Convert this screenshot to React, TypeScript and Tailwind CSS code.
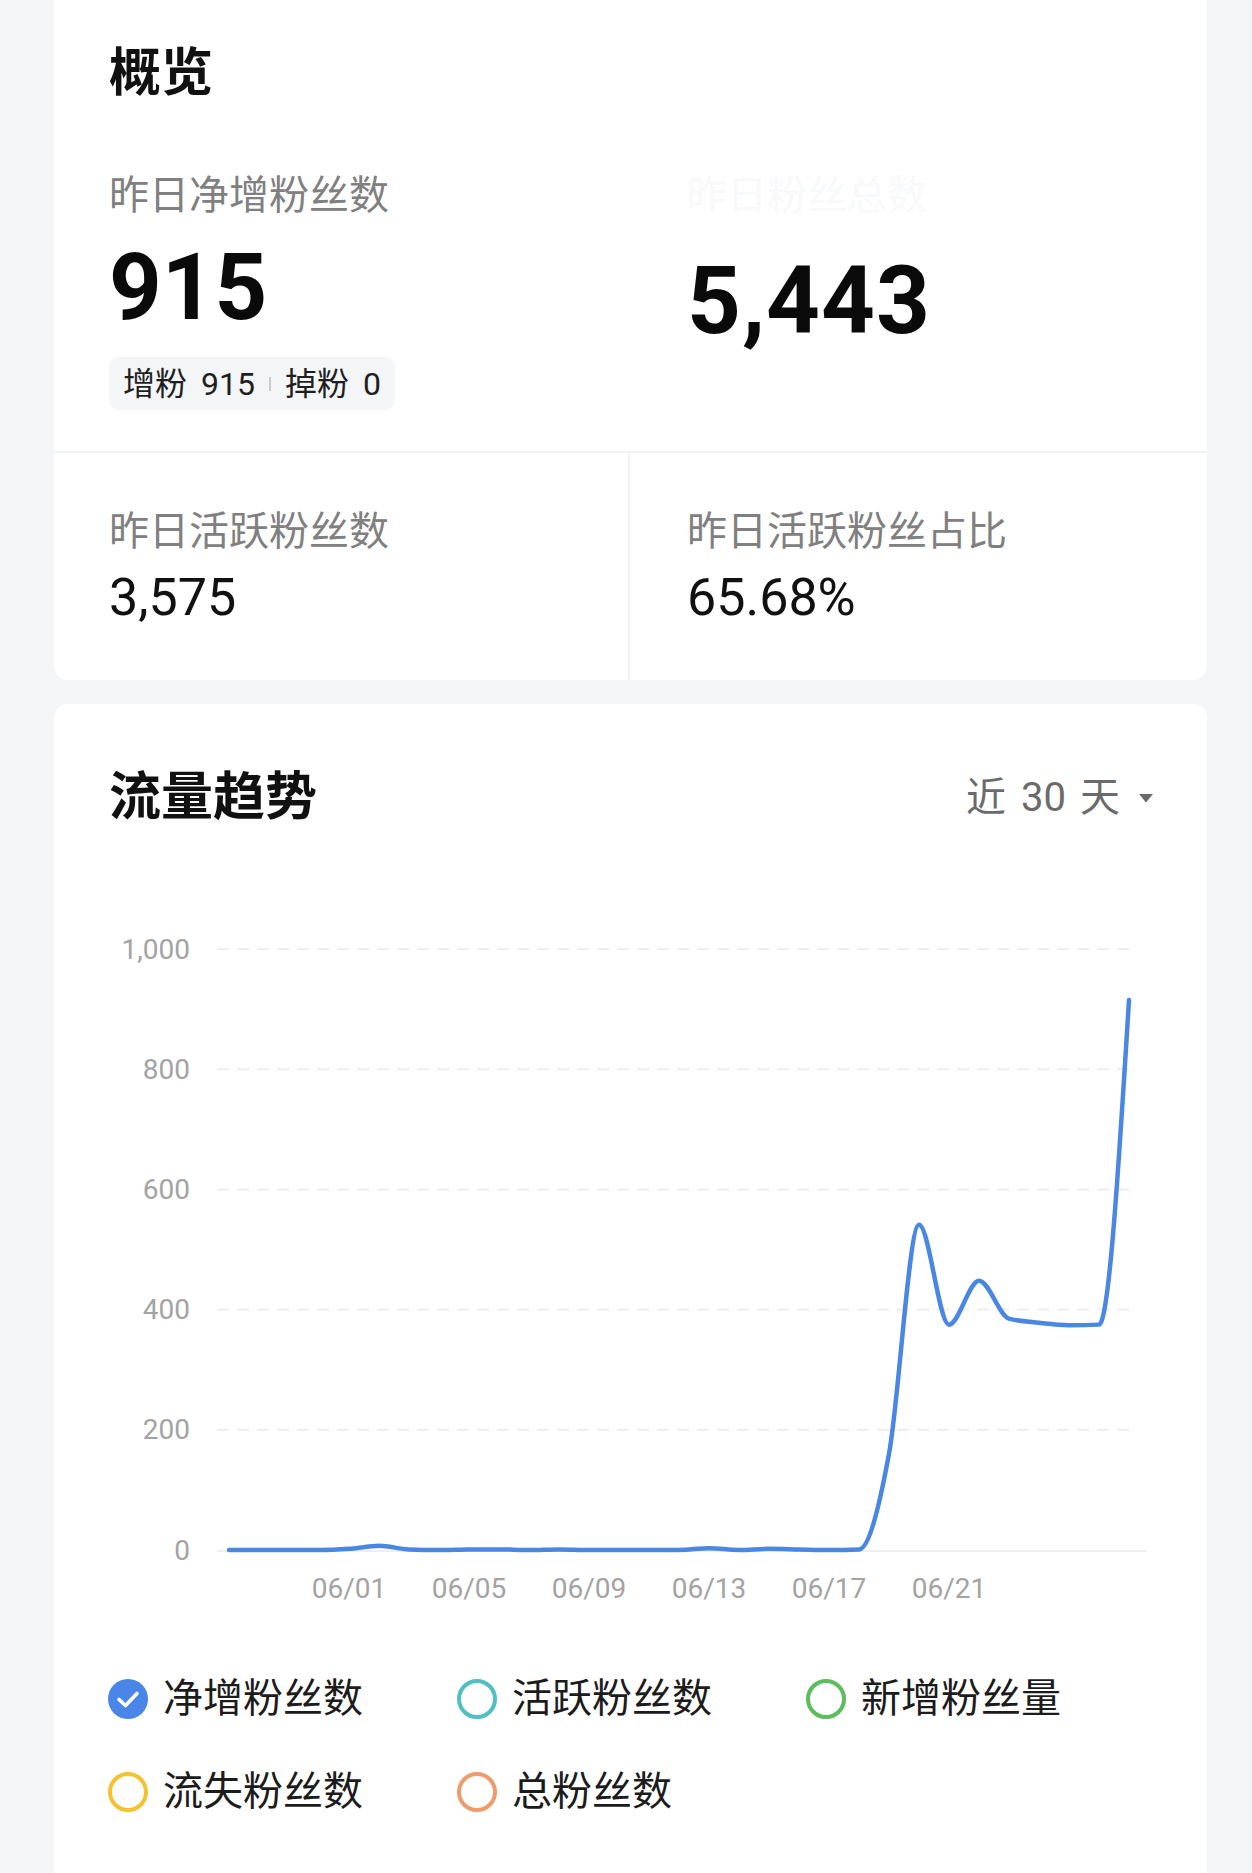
import React from "react";

const values = [
  0, 0, 0, 0, 2, 7, 1, 0, 1, 1, 0, 1, 0, 0, 0, 0, 3, 0, 2, 1, 0, 1, 160, 541,
  375, 448, 385, 378, 374, 375, 915,
];

const dates = ["06/01", "06/05", "06/09", "06/13", "06/17", "06/21"];

const xAt = (i: number) => 175 + 30 * i;
const yAt = (v: number) => 671 - 0.601 * v;

// monotone cubic, same idea as d3 curveMonotoneX
function monotonePath(pts: [number, number][]) {
  const n = pts.length;
  const h: number[] = [];
  const s: number[] = [];
  for (let i = 0; i < n - 1; i++) {
    h[i] = pts[i + 1][0] - pts[i][0];
    s[i] = (pts[i + 1][1] - pts[i][1]) / h[i];
  }
  const t: number[] = new Array(n).fill(0);
  for (let i = 1; i < n - 1; i++) {
    const p = (s[i - 1] * h[i] + s[i] * h[i - 1]) / (h[i - 1] + h[i]);
    t[i] =
      (Math.sign(s[i - 1]) + Math.sign(s[i])) *
        Math.min(Math.abs(s[i - 1]), Math.abs(s[i]), 0.5 * Math.abs(p)) || 0;
  }
  t[0] = n > 2 ? (3 * s[0] - t[1]) / 2 : s[0];
  t[n - 1] = n > 2 ? (3 * s[n - 2] - t[n - 2]) / 2 : s[n - 2];
  let d = `M${pts[0][0]},${pts[0][1]}`;
  for (let i = 0; i < n - 1; i++) {
    const dx = h[i] / 3;
    d += ` C${pts[i][0] + dx},${pts[i][1] + t[i] * dx} ${pts[i + 1][0] - dx},${
      pts[i + 1][1] - t[i + 1] * dx
    } ${pts[i + 1][0]},${pts[i + 1][1]}`;
  }
  return d;
}

function TrendChart() {
  const pts = values.map((v, i) => [xAt(i), yAt(v)] as [number, number]);
  return (
    <svg width={1153} height={750} viewBox="0 0 1153 750" className="block">
      {[200, 400, 600, 800, 1000].map((v) => (
        <line
          key={v}
          x1={163}
          x2={1083}
          y1={yAt(v)}
          y2={yAt(v)}
          stroke="#ededed"
          strokeWidth={2}
          strokeDasharray="12 8"
        />
      ))}
      <line x1={163} x2={1093} y1={yAt(0) + 1} y2={yAt(0) + 1} stroke="#efefef" strokeWidth={2} />
      {[0, 200, 400, 600, 800, 1000].map((v) => (
        <text
          key={v}
          x={136}
          y={yAt(v)}
          textAnchor="end"
          dominantBaseline="central"
          fontSize={28}
          fill="#a3a3a3"
          fontFamily="Roboto, 'Noto Sans CJK SC', sans-serif"
        >
          {v.toLocaleString("en-US")}
        </text>
      ))}
      {dates.map((d, k) => (
        <text
          key={d}
          x={xAt(4 + k * 4)}
          y={719}
          textAnchor="middle"
          fontSize={28}
          fill="#a3a3a3"
          fontFamily="Roboto, 'Noto Sans CJK SC', sans-serif"
        >
          {d}
        </text>
      ))}
      <path
        d={monotonePath(pts)}
        fill="none"
        stroke="#4a87e2"
        strokeWidth={4.5}
        strokeLinecap="round"
        strokeLinejoin="round"
      />
    </svg>
  );
}

const legend = [
  { label: "净增粉丝数", color: "", checked: true },
  { label: "活跃粉丝数", color: "border-[#4fbfbf]", checked: false },
  { label: "新增粉丝量", color: "border-[#5cbd5c]", checked: false },
  { label: "流失粉丝数", color: "border-[#f2c232]", checked: false },
  { label: "总粉丝数", color: "border-[#ee9c6c]", checked: false },
];

function LegendItem({ label, color, checked }: { label: string; color: string; checked: boolean }) {
  return (
    <div className="flex items-center gap-[15px]">
      {checked ? (
        <svg width={40} height={40} viewBox="0 0 40 40" className="shrink-0">
          <circle cx={20} cy={20} r={20} fill="#4a86e8" />
          <path
            d="M11 20.5 L17.5 26.5 L29 14.5"
            fill="none"
            stroke="#fff"
            strokeWidth={3.6}
            strokeLinecap="round"
            strokeLinejoin="round"
          />
        </svg>
      ) : (
        <span className={`block w-[40px] h-[40px] shrink-0 rounded-full border-[4px] ${color}`} />
      )}
      <span className="text-[40px] leading-[40px] text-[#1c1c1c]">{label}</span>
    </div>
  );
}

export default function App() {
  return (
    <div className="min-h-[1873px] w-[1252px] bg-[#f4f5f7] overflow-hidden font-['Roboto','Noto_Sans_CJK_SC',sans-serif]">
      {/* overview card */}
      <div className="ml-[54px] w-[1153px] bg-white rounded-b-[14px]">
        <div className="pl-[55px] pt-[48px]">
          <h1 className="text-[52px] leading-[52px] font-bold text-[#111]">概览</h1>
        </div>

        <div className="mt-[76px] grid grid-cols-[574px_1fr] border-b-[2px] border-[#f2f3f5]">
          <div className="pl-[55px] pb-[41px]">
            <div className="text-[40px] leading-[40px] text-[#808080]">昨日净增粉丝数</div>
            <div className="mt-[26px] text-[92px] leading-[92px] font-bold text-[#0a0a0a]">915</div>
            <div className="mt-[23px] inline-flex items-center h-[53px] px-[14px] rounded-[10px] bg-[#f4f5f7] text-[32px] leading-[32px] text-[#1f1f1f]">
              <span>增粉</span>
              <span className="ml-[14px]">915</span>
              <span className="mx-[14px] block w-[2px] h-[14px] bg-[#cccccc]" />
              <span>掉粉</span>
              <span className="ml-[14px]">0</span>
            </div>
          </div>
          <div className="pl-[59px]">
            <div className="text-[40px] leading-[40px] text-[#f8f9fa]">昨日粉丝总数</div>
            <div className="mt-[38px] text-[94px] leading-[94px] font-bold text-[#0a0a0a] tracking-[1px]">5,443</div>
          </div>
        </div>

        <div className="grid grid-cols-[574px_1fr]">
          <div className="pl-[55px] pt-[59px] pb-[56px]">
            <div className="text-[40px] leading-[40px] text-[#808080]">昨日活跃粉丝数</div>
            <div className="mt-[20px] text-[52px] leading-[52px] text-[#111]">3,575</div>
          </div>
          <div className="pl-[57px] pt-[59px] pb-[56px] border-l-[2px] border-[#f2f3f5]">
            <div className="text-[40px] leading-[40px] text-[#808080]">昨日活跃粉丝占比</div>
            <div className="mt-[20px] text-[52px] leading-[52px] text-[#111]">65.68%</div>
          </div>
        </div>
      </div>

      {/* trend card */}
      <div className="ml-[54px] mt-[24px] w-[1153px] bg-white rounded-[14px] pb-[80px]">
        <div className="flex items-center justify-between pl-[55px] pr-[53px] pt-[68px]">
          <h2 className="text-[52px] leading-[52px] font-bold text-[#111]">流量趋势</h2>
          <div className="flex items-center text-[40px] leading-[40px] text-[#6b6b6b]">
            <span>近</span>
            <span className="ml-[15px]">30</span>
            <span className="ml-[14px]">天</span>
            <svg width={16} height={10} viewBox="0 0 16 10" className="ml-[18px]">
              <path d="M1 1 H15 L8 9.5 Z" fill="#6b6b6b" />
            </svg>
          </div>
        </div>

        <div className="mt-[55px]">
          <TrendChart />
        </div>

        <div className="mt-[50px] pl-[54px] grid grid-cols-[349px_349px_1fr] gap-y-[53px]">
          {legend.map((l) => (
            <LegendItem key={l.label} {...l} />
          ))}
        </div>
      </div>
    </div>
  );
}
